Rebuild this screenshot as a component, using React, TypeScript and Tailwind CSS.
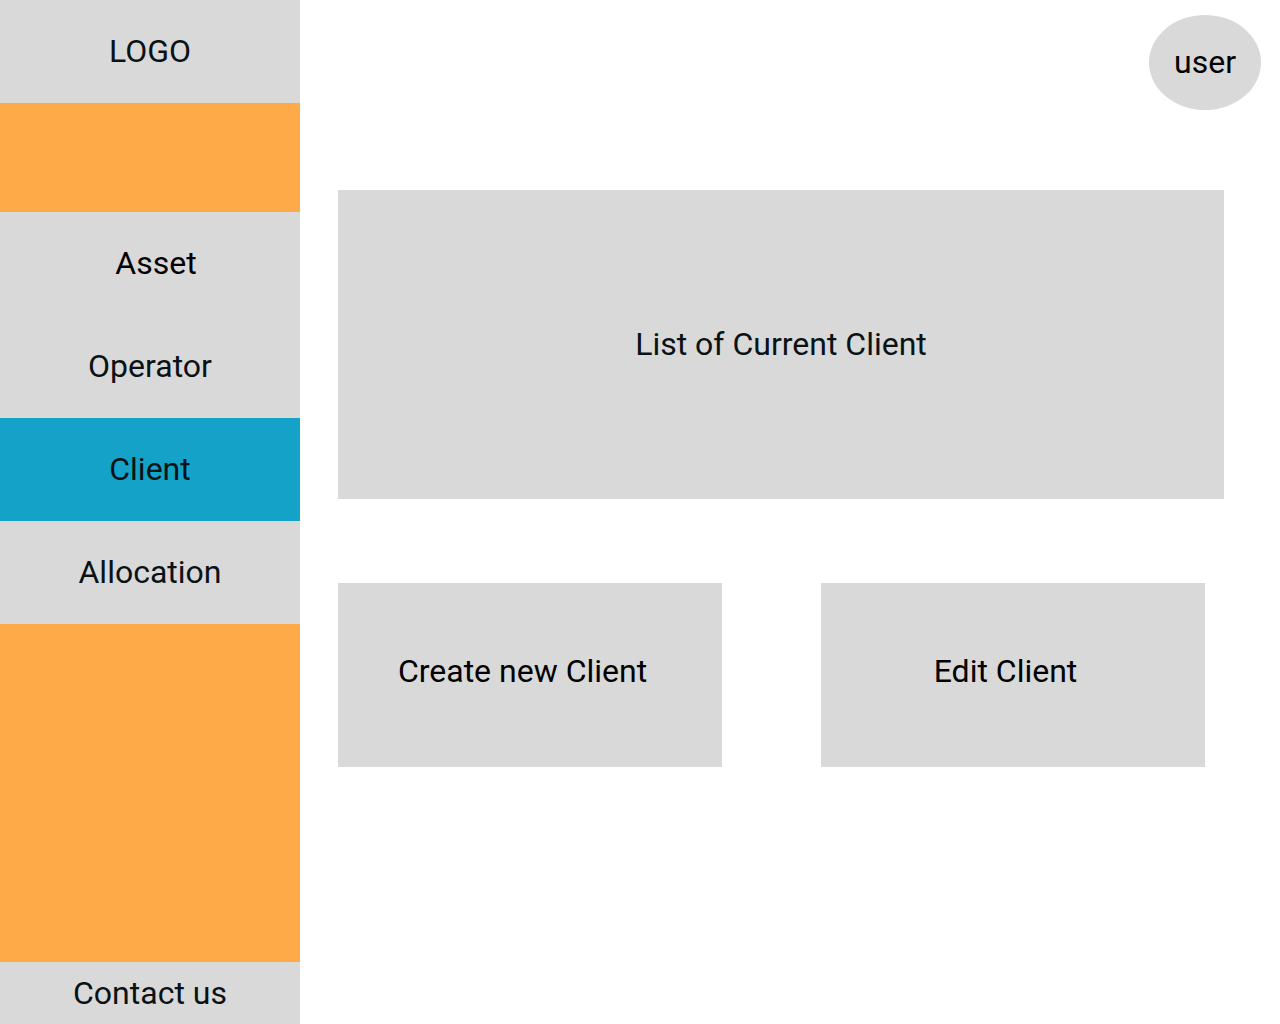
const navItems = [
  { label: "Asset", className: "bg-[#d9d9d9] pl-3 text-black" },
  { label: "Operator", className: "bg-[#d9d9d9] text-[#091214]" },
  { label: "Client", className: "bg-[#15a2c9] text-[#091214]", current: true },
  { label: "Allocation", className: "bg-[#d9d9d9] text-[#091214]" },
];

function Sidebar() {
  return (
    <aside className="flex w-[300px] shrink-0 flex-col bg-[#ffaa49]">
      <a
        href="#home"
        className="mb-[109px] flex h-[103px] items-center justify-center bg-[#d9d9d9] text-[#091214]"
      >
        LOGO
      </a>
      <nav className="flex flex-col">
        {navItems.map((item) => (
          <a
            key={item.label}
            href={`#${item.label.toLowerCase()}`}
            aria-current={item.current ? "page" : undefined}
            className={`flex h-[103px] items-center justify-center ${item.className}`}
          >
            {item.label}
          </a>
        ))}
      </nav>
      <a
        href="#contact"
        className="mt-auto flex h-[62px] items-center justify-center bg-[#d9d9d9] text-[#091214]"
      >
        Contact us
      </a>
    </aside>
  );
}

export default function App() {
  return (
    <div className="flex min-h-screen bg-white font-['Roboto',sans-serif] text-[32px] leading-[37px] text-black">
      <Sidebar />
      <div className="flex min-w-0 flex-1 flex-col">
        <header className="flex justify-end pt-[15px] pr-[19px]">
          <button
            type="button"
            className="flex h-[95px] w-[112px] items-center justify-center rounded-[50%] bg-[#d9d9d9]"
          >
            user
          </button>
        </header>
        <main className="mt-20 pr-14 pl-[38px]">
          <section className="flex h-[309px] items-center justify-center bg-[#d9d9d9] text-[#091214]">
            <h1>List of Current Client</h1>
          </section>
          <div className="mt-[84px] mr-[19px] grid grid-cols-2 gap-[99px]">
            <button
              type="button"
              className="flex h-[184px] items-center justify-center bg-[#d9d9d9] pr-[15px] pb-2"
            >
              Create new Client
            </button>
            <button
              type="button"
              className="flex h-[184px] items-center justify-center bg-[#d9d9d9] pr-[15px] pb-2"
            >
              Edit Client
            </button>
          </div>
        </main>
      </div>
    </div>
  );
}
